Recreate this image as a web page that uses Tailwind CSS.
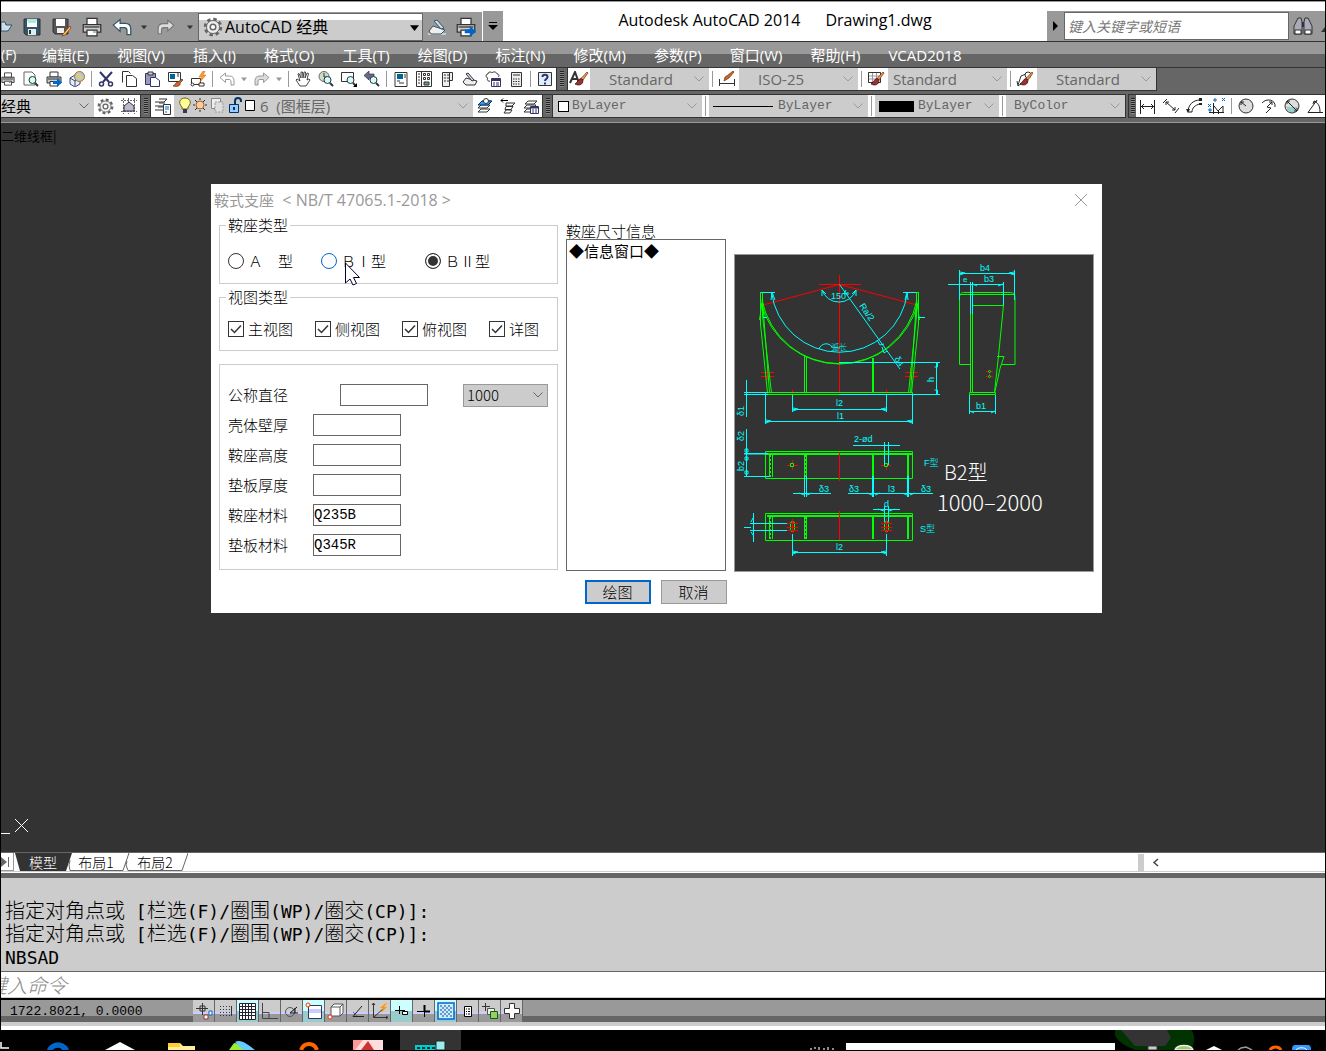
<!DOCTYPE html>
<html lang="zh-CN">
<head>
  <meta charset="UTF-8" />
  <meta name="viewport" content="width=device-width, initial-scale=1.0" />
  <title>Autodesk AutoCAD 2014 - Drawing1.dwg</title>
  <script src="https://cdn.jsdelivr.net/npm/@tailwindcss/browser@4"></script>
</head>
<body class="min-h-screen flex flex-col bg-black overflow-hidden font-['Open_Sans','Noto_Sans_CJK_SC',sans-serif] text-black">

  <!-- Shared icon shapes -->
  <svg class="hidden">
    <symbol id="chev" viewBox="0 0 12 12"><path d="M1.500 3.500l4.500 4.500 4.500-4.500" fill="none" stroke="currentColor"/></symbol>
    <symbol id="tri" viewBox="0 0 8 8"><path d="M0 2h8L4 7z" fill="currentColor"/></symbol>
    <symbol id="printer" viewBox="0 0 16 16">
      <path d="M4 1h8v5H4z" fill="#fff" stroke="#333"/><path d="M1 6h14v6H1z" fill="#ccc" stroke="#333"/>
      <path d="M2 8h12" stroke="#333"/><path d="M4 10.500h8V15H4z" fill="#fff" stroke="#333"/><path d="M9 12h2" stroke="#39c"/>
    </symbol>
    <symbol id="undo" viewBox="0 0 16 16"><path d="M1 6.500L6.500 2v3h4c3 0 4.500 2 4.500 4.500V14h-3v-3c0-1.500-.5-2.500-2-2.500H6.500v3z" fill="#fff" stroke="currentColor"/></symbol>
    <symbol id="redo" viewBox="0 0 16 16"><path d="M15 6.500L9.500 2v3h-4C2.500 5 1 7 1 9.500V14h3v-3c0-1.500.5-2.500 2-2.500h3.500v3z" fill="#ddd" stroke="currentColor"/></symbol>
    <symbol id="brush" viewBox="0 0 16 16"><path d="M15 2l-5 7-2-1.500L14 1z" fill="#f93" stroke="#633" stroke-width=".7"/><path d="M10 9L8 7.500C5 8 5.500 11 2 13c4 2 8 1 8-4z" fill="#933" stroke="#300" stroke-width=".7"/></symbol>
    <symbol id="lens" viewBox="0 0 16 16"><circle cx="9.500" cy="9" r="3.500" fill="#cff" stroke="#333"/><path d="M12 12l3 3" stroke="#333" stroke-width="2"/></symbol>
    <symbol id="gear" viewBox="0 0 20 20">
      <circle cx="10" cy="10" r="7.800" fill="none" stroke="#666" stroke-width="3" stroke-dasharray="3.400 2.730"/>
      <circle cx="10" cy="10" r="6.500" fill="#eee" stroke="#666"/><circle cx="10" cy="10" r="2.800" fill="#fff" stroke="#666" stroke-width="1.500"/>
    </symbol>
    <symbol id="layers" viewBox="0 0 16 16"><path d="M5 3h9l-3 3H2zM4 7h9l-3 3H1zM4 11h9l-3 3H1z" fill="#fff" stroke="#333"/></symbol>
    <symbol id="blueArrow" viewBox="0 0 16 16"><path d="M7 10h4V7l5 4.500-5 4.500v-3H7z" fill="#06c"/></symbol>
    <symbol id="tick" viewBox="0 0 16 16"><path d="M3 8l3.500 3.500L13 4.500" fill="none" stroke="#333" stroke-width="1.500"/></symbol>
    <symbol id="palette" viewBox="0 0 16 16">
      <path d="M2 1.500h12v14H2z" fill="#fff" stroke="#333"/><path d="M4 3h6v5H4z" fill="#069"/><path d="M11 4h2M11 6h2M4 10h3M6 12h5" stroke="#333"/>
    </symbol>
  </svg>

  <div class="flex-1 flex flex-col border-t border-x border-black bg-white">

    <!-- Title bar -->
    <header class="h-[41px] shrink-0 flex items-end border-t border-b border-t-[#999] border-b-[#333]">
      <div class="h-[29px] w-[482px] flex items-center bg-[#999] border-r border-white">
        <button class="w-4 h-6 text-[#333]" aria-label="打开"><svg class="w-3 h-4" viewBox="0 0 12 16"><path d="M0 3h4l1 3h6l-4 6H0z" fill="#cde" stroke="#356"/></svg></button>
        <button class="w-[30px] grid place-items-center" aria-label="保存"><svg class="size-[18px]" viewBox="0 0 18 18"><path d="M1 1h16v16H3l-2-2z" fill="#356" stroke="#333"/><path d="M4 1h10v8H4z" fill="#fff"/><path d="M4 2h10M5 4h8" stroke="#6cc"/><path d="M5 11h8v6H5z" fill="#dee"/><path d="M6 12h2v4H6z" fill="#333"/></svg></button>
        <button class="w-[30px] grid place-items-center" aria-label="另存为"><svg class="size-5" viewBox="0 0 20 20"><path d="M1 2h15v15H3l-2-2z" fill="#555" stroke="#333"/><path d="M4 2h9v7H4z" fill="#fff"/><path d="M5 11h7v5H5z" fill="#eee"/><path d="M18 9l-7 8-1 2 3-1 6-7z" fill="#fc6" stroke="#930" stroke-width=".8"/></svg></button>
        <button class="w-[30px] grid place-items-center" aria-label="打印"><svg class="size-5"><use href="#printer"/></svg></button>
        <button class="w-[30px] grid place-items-center text-[#356]" aria-label="放弃"><svg class="size-5"><use href="#undo"/></svg></button>
        <button class="w-[14px] grid place-items-center text-[#333]" aria-label="放弃列表"><svg class="size-[6px]"><use href="#tri"/></svg></button>
        <button class="w-[30px] grid place-items-center text-[#777]" aria-label="重做"><svg class="size-[18px]"><use href="#redo"/></svg></button>
        <button class="w-[17px] grid place-items-center text-[#333]" aria-label="重做列表"><svg class="size-[6px]"><use href="#tri"/></svg></button>
        <div class="relative w-[225px] h-[28px] flex items-center border border-[#666] bg-linear-to-b from-white from-25% to-[#ccc] to-25% pl-1">
          <svg class="size-5 shrink-0"><use href="#gear"/></svg>
          <select aria-label="工作空间" class="flex-1 h-full appearance-none pl-[2px] text-base leading-6"><option>AutoCAD 经典</option></select>
          <svg class="absolute right-[3px] top-[9px] size-[9px] pointer-events-none"><use href="#tri"/></svg>
        </div>
        <button class="w-[28px] grid place-items-center" aria-label="图纸集"><svg class="size-5" viewBox="0 0 20 20"><path d="M1 16h18v2H1z" fill="#ccc"/><path d="M2 14l4-5 12 4-4 4H4z" fill="#eee" stroke="#356"/><path d="M7 4l3-1 7 8-3 1z" fill="#cde" stroke="#356"/></svg></button>
        <button class="w-[30px] grid place-items-center" aria-label="批处理打印"><svg class="size-5"><use href="#printer"/><use href="#blueArrow"/></svg></button>
      </div>
      <button class="h-[30px] w-[20px] grid place-items-center bg-[#999] mr-auto" aria-label="自定义快速访问工具栏"><svg class="size-[10px]" viewBox="0 0 10 10"><path d="M1 1.500h8" stroke="#000"/><path d="M0 4h10L5 9z"/></svg></button>
      <h1 class="h-[31px] whitespace-pre text-base leading-5 px-2">Autodesk AutoCAD 2014      Drawing1.dwg</h1>
      <div class="ml-auto h-[30px] w-[278px] flex items-center bg-[#999]">
        <svg class="w-[17px] h-3" viewBox="0 0 17 12"><path d="M6 1l5 5-5 5z"/></svg>
        <input type="text" aria-label="搜索" placeholder="键入关键字或短语" class="w-[225px] h-[28px] bg-white border border-[#666] px-[3px] text-sm italic placeholder:text-[#777]" />
        <svg class="ml-1 size-5" viewBox="0 0 20 20"><path d="M3 6l2-4h3l1 4v12H1V10zM17 6l-2-4h-3l-1 4v12h8V10z" fill="#aab" stroke="#333"/><path d="M2 14h6v4H2zM12 14h6v4h-6z" fill="#fff" stroke="#333"/><path d="M9 6h2v5H9z" fill="#333"/></svg>
        <svg class="ml-auto w-1 h-5" viewBox="0 0 4 20"><path d="M4 11l-4 5h4z" fill="#333"/></svg>
      </div>
    </header>

    <!-- Menu -->
    <nav class="h-[26px] shrink-0 flex items-center gap-7 whitespace-nowrap text-white text-[15px] leading-5 bg-linear-to-b from-[#999] from-50% to-[#666] to-50% border-b border-[#333]">
      <a href="#" class="w-[13px] text-sm leading-5">(F)</a>
      <a href="#">编辑(E)</a>
      <a href="#">视图(V)</a>
      <a href="#">插入(I)</a>
      <a href="#">格式(O)</a>
      <a href="#">工具(T)</a>
      <a href="#">绘图(D)</a>
      <a href="#">标注(N)</a>
      <a href="#">修改(M)</a>
      <a href="#">参数(P)</a>
      <a href="#">窗口(W)</a>
      <a href="#">帮助(H)</a>
      <a href="#">VCAD2018</a>
    </nav>

    <!-- Standard and styles toolbars -->
    <div class="h-[26px] shrink-0 flex items-start bg-[#666]">
      <div class="h-[23px] flex items-center bg-white border-b border-r border-[#333]">
        <button class="w-[18px] flex justify-end pr-1" aria-label="打印"><svg class="size-4"><use href="#printer"/></svg></button>
        <button class="w-[23px] grid place-items-center" aria-label="打印预览"><svg class="size-4" viewBox="0 0 16 16"><path d="M1 1h8l3 3v10H1z" fill="#fff" stroke="#666"/><use href="#lens"/></svg></button>
        <button class="w-[23px] grid place-items-center" aria-label="发布"><svg class="size-4"><use href="#printer"/><use href="#blueArrow"/></svg></button>
        <button class="w-[23px] grid place-items-center" aria-label="三维打印"><svg class="size-4" viewBox="0 0 16 16"><path d="M1 7l5-3 5 3v6l-5 3-5-3z" fill="#def" stroke="#446"/><path d="M6 10v5M1 7l5 3 5-3" stroke="#446" fill="none"/><circle cx="10.500" cy="5.500" r="5" fill="#9cf" stroke="#c60"/><path d="M8 3c3 0 4 2 3 6M7 7c3-2 6-1 7 0" stroke="#fc3" stroke-width="1.500" fill="none"/></svg></button>
        <div class="w-[6px] h-4 flex justify-center"><i class="w-px bg-[#999]"></i></div>
        <button class="w-[23px] grid place-items-center" aria-label="剪切"><svg class="size-4" viewBox="0 0 16 16"><path d="M2 1l9 10M14 1L5 11" stroke="#336" stroke-width="2"/><circle cx="3.500" cy="13" r="2" fill="none" stroke="#336" stroke-width="1.500"/><circle cx="12.500" cy="13" r="2" fill="none" stroke="#336" stroke-width="1.500"/></svg></button>
        <button class="w-[23px] grid place-items-center" aria-label="复制"><svg class="size-4" viewBox="0 0 16 16"><path d="M1.500 11.500V.5h6l2 2" fill="none" stroke="#333"/><path d="M5.500 4.500h6l4 3v8h-10z" fill="#fff" stroke="#333"/></svg></button>
        <button class="w-[23px] grid place-items-center" aria-label="粘贴"><svg class="size-4" viewBox="0 0 16 16"><path d="M1.500 2.500h10v11h-10z" fill="#99b" stroke="#336"/><path d="M4 1h5v3H4z" fill="#ccc" stroke="#333"/><path d="M6.500 6.500h5l4 3v6h-9z" fill="#fff" stroke="#336"/></svg></button>
        <button class="w-[23px] grid place-items-center" aria-label="特性匹配"><svg class="size-4" viewBox="0 0 16 16"><path d="M1.500 1.500h12v9h-12z" fill="#fff" stroke="#333"/><path d="M3 3h5v5H3z" fill="#069"/><path d="M10 3h2M10 5h2" stroke="#333"/><path d="M15 8l-4 3c-3 0-2 3-5 4 4 1 8 0 7-3l3-3z" fill="#c63" stroke="#630" stroke-width=".7"/></svg></button>
        <button class="w-[23px] grid place-items-center" aria-label="块编辑器"><svg class="size-4" viewBox="0 0 16 16"><path d="M1.500 7.500h9v6h-9z" fill="#fff" stroke="#333"/><circle cx="2.500" cy="13.500" r="1.500" fill="#fff" stroke="#333"/><path d="M9 12h5v3H9z" fill="#fff" stroke="#333"/><path d="M13 0L9 6h3l-2 5 6-7h-3l2-4z" fill="#f93" stroke="#c60" stroke-width=".5"/></svg></button>
        <div class="w-[6px] h-4 flex justify-center"><i class="w-px bg-[#999]"></i></div>
        <button class="w-[23px] grid place-items-center text-[#999]" aria-label="放弃"><svg class="size-4"><use href="#undo"/></svg></button>
        <button class="w-3 grid place-items-center text-[#999]" aria-label="放弃列表"><svg class="size-[6px]"><use href="#tri"/></svg></button>
        <button class="w-[23px] grid place-items-center text-[#999]" aria-label="重做"><svg class="size-4"><use href="#redo"/></svg></button>
        <button class="w-3 grid place-items-center text-[#999]" aria-label="重做列表"><svg class="size-[6px]"><use href="#tri"/></svg></button>
        <div class="w-[6px] h-4 flex justify-center"><i class="w-px bg-[#999]"></i></div>
        <button class="w-[23px] grid place-items-center" aria-label="平移"><svg class="size-4" viewBox="0 0 16 16"><path d="M5 15l-4-6 1-1 3 2-2-7 1-.5L6 7V1h1.500l.5 6 1-6h1.500L10 7l2-5 1.500.5L12 9l2-1 1 1-4 6z" fill="#fff" stroke="#333" stroke-width=".9"/></svg></button>
        <button class="w-[23px] grid place-items-center" aria-label="实时缩放"><svg class="size-4" viewBox="0 0 16 16"><circle cx="6" cy="5.500" r="5" fill="#cdc" stroke="#666"/><path d="M6 2v4h3" stroke="#333" fill="none"/><use href="#lens"/></svg></button>
        <button class="w-[23px] grid place-items-center" aria-label="窗口缩放"><svg class="size-4" viewBox="0 0 16 16"><path d="M.5 1.500h12v9H.5z" fill="#fff" stroke="#333"/><use href="#lens"/><path d="M16 12v4h-4z"/></svg></button>
        <button class="w-[23px] grid place-items-center" aria-label="缩放上一个"><svg class="size-4" viewBox="0 0 16 16"><path d="M0 4.500L5 0v3h5v4H5v2z" fill="#669" stroke="#333" stroke-width=".7"/><use href="#lens"/></svg></button>
        <div class="w-[6px] h-4 flex justify-center"><i class="w-px bg-[#999]"></i></div>
        <button class="w-[23px] grid place-items-center" aria-label="特性"><svg class="size-4"><use href="#palette"/></svg></button>
        <button class="w-[23px] grid place-items-center" aria-label="设计中心"><svg class="size-4" viewBox="0 0 16 16"><path d="M.5.5h15v15H.5z" fill="#fff" stroke="#333"/><path d="M5.500 1v14M2 3h2M2 6h2M2 9h2M2 12h2" stroke="#333"/><path d="M7.500 2.500h2v2h-2zM11.500 2.500h2v2h-2zM7.500 6.500h2v2h-2zM11.500 6.500h2v2h-2z" fill="none" stroke="#333"/><path d="M8 11h5v3H8z" fill="#699" stroke="#333"/></svg></button>
        <button class="w-[23px] grid place-items-center" aria-label="工具选项板"><svg class="size-4" viewBox="0 0 16 16"><path d="M3.500 1.500h7v14h-7zM10.500 1.500h3v8h-3z" fill="#eee" stroke="#333"/><path d="M5 4h2M8 4h2M5 7h2M8 7h2M5 10h2M8 10h2" stroke="#333"/></svg></button>
        <button class="w-[23px] grid place-items-center" aria-label="图纸集管理器"><svg class="size-4" viewBox="0 0 16 16"><path d="M1 11l3-4 11 3-2 4H4z" fill="#eee" stroke="#333"/><path d="M4 3l2-1 6 7-2 1z" fill="#cde" stroke="#333"/></svg></button>
        <button class="w-[23px] grid place-items-center" aria-label="标记集管理器"><svg class="size-4" viewBox="0 0 16 16"><path d="M3 3c0-3 4-2 4-1 1-2 5-1 5 1 3 0 2 3 1 3M3 3c-3 0-2 4 0 4-2 2 1 4 2 3" fill="none" stroke="#333"/><path d="M6.500 7.500h9v8h-9z" fill="#fff" stroke="#336"/><path d="M7 9h8" stroke="#336" stroke-width="2"/><path d="M8 12h2M11 12h3M8 14h2M11 14h3" stroke="#336"/></svg></button>
        <button class="w-[23px] grid place-items-center" aria-label="快速计算器"><svg class="size-4" viewBox="0 0 16 16"><path d="M3.500 1.500h10v14h-10z" fill="#eee" stroke="#333"/><path d="M5 4h7" stroke="#333"/><path d="M5 8h7M5 10.500h7M5 13h7" stroke="#333" stroke-dasharray="1.500 1"/></svg></button>
        <div class="w-[6px] h-4 flex justify-center"><i class="w-px bg-[#999]"></i></div>
        <button class="w-[23px] grid place-items-center" aria-label="帮助"><svg class="size-4" viewBox="0 0 16 16"><path d="M1.500 1.500h13v13h-13z" fill="#def" stroke="#333"/><path d="M5.500 6c0-3 5-3 5 0 0 2-2.500 2-2.500 4M8 11.500v2" stroke="#336" stroke-width="2" fill="none"/></svg></button>
      </div>
      <div class="h-[23px] w-[11px] grid place-items-center border-b border-r border-[#333]"><i class="w-1 h-4 bg-[repeating-linear-gradient(#222_0_1px,#888_1px_2px)]"></i></div>
      <div class="h-[23px] flex items-center bg-white border-b border-r border-[#333] text-[15px] text-[#666]">
        <svg class="w-[22px] h-4" viewBox="0 0 22 16"><path d="M2 12L7 1l4 11M4 8h6" stroke="#333" stroke-width="2" fill="none"/><use href="#brush" x="5" width="16" height="16"/></svg>
        <div class="relative w-[119px] h-[22px]">
          <select aria-label="文字样式" class="appearance-none w-full h-full bg-[#ccc] pl-[19px]"><option>Standard</option></select>
          <svg class="absolute right-1 top-[5px] size-3 text-[#999] pointer-events-none"><use href="#chev"/></svg>
        </div>
        <div class="w-[6px] h-4 flex justify-center"><i class="w-px bg-[#999]"></i></div>
        <svg class="w-6 h-4" viewBox="0 0 24 16"><path d="M4.500 8v7M19.500 8v7M5 12.500h14" stroke="#333"/><path d="M19 1l-5 6-5 3 1-4 3-2 5-4z" fill="#c63" stroke="#630" stroke-width=".7"/></svg>
        <div class="relative w-[119px] h-[22px]">
          <select aria-label="标注样式" class="appearance-none w-full h-full bg-[#ccc] pl-[19px]"><option>ISO-25</option></select>
          <svg class="absolute right-1 top-[5px] size-3 text-[#999] pointer-events-none"><use href="#chev"/></svg>
        </div>
        <div class="w-[6px] h-4 flex justify-center"><i class="w-px bg-[#999]"></i></div>
        <svg class="w-6 h-4" viewBox="0 0 24 16"><path d="M4.500 1.500h12v10h-12zM4.500 5h12M8.500 2v9M12.500 2v9M4.500 8h12" fill="#fff" stroke="#999"/><path d="M4.500 1.500h12v10h-12z" fill="none" stroke="#333"/><use href="#brush" x="5" width="16" height="16"/></svg>
        <div class="relative w-[119px] h-[22px]">
          <select aria-label="表格样式" class="appearance-none w-full h-full bg-[#ccc] pl-[5px]"><option>Standard</option></select>
          <svg class="absolute right-1 top-[5px] size-3 text-[#999] pointer-events-none"><use href="#chev"/></svg>
        </div>
        <div class="w-[6px] h-4 flex justify-center"><i class="w-px bg-[#999]"></i></div>
        <svg class="w-6 h-4" viewBox="0 0 24 16"><path d="M5 14l3-9 5-2M4 10l1 5 4-3" stroke="#333" fill="none"/><circle cx="15" cy="4" r="3" fill="#fff" stroke="#333"/><use href="#brush" x="5" width="16" height="16"/></svg>
        <div class="relative w-[119px] h-[22px]">
          <select aria-label="多重引线样式" class="appearance-none w-full h-full bg-[#ccc] pl-[19px]"><option>Standard</option></select>
          <svg class="absolute right-1 top-[5px] size-3 text-[#999] pointer-events-none"><use href="#chev"/></svg>
        </div>
      </div>
    </div>

    <!-- Workspace, layers, properties and dimension toolbars -->
    <div class="h-[29px] shrink-0 flex items-start bg-[#666] border-b border-[#999] font-['Liberation_Mono','Noto_Sans_CJK_SC',monospace] text-[13px] text-[#666]">
      <div class="h-6 flex items-center bg-white border-y border-r border-[#333]">
        <div class="relative w-[93px] h-[22px]">
          <select aria-label="工作空间工具栏" class="appearance-none w-full h-full bg-[#ccc] text-black text-[15px] font-['Open_Sans','Noto_Sans_CJK_SC',sans-serif]"><option>经典</option></select>
          <svg class="absolute right-1 top-[5px] size-3 text-[#666] pointer-events-none"><use href="#chev"/></svg>
        </div>
        <button class="w-[23px] grid place-items-center" aria-label="工作空间设置"><svg class="size-[17px]"><use href="#gear"/></svg></button>
        <button class="w-[23px] grid place-items-center" aria-label="我的工作空间"><svg class="size-4" viewBox="0 0 16 16"><path d="M2.500 0v16M7.500 0v16M13.500 0v16M0 2.500h16M0 13.500h16" stroke="#666" stroke-dasharray="2 1"/><path d="M3 8l5-4 5 4v5H3z" fill="#bbc" stroke="#334"/></svg></button>
      </div>
      <div class="h-6 w-[10px] grid place-items-center border-y border-r border-[#333]"><i class="w-1 h-4 bg-[repeating-linear-gradient(#222_0_1px,#888_1px_2px)]"></i></div>
      <div class="h-6 flex items-center bg-white border-y border-r border-[#333]">
        <button class="w-[23px] grid place-items-center" aria-label="图层特性管理器"><svg class="size-[17px]" viewBox="0 0 17 17"><path d="M5 1h8l-3 3H1M5 5h6M1 8h8M4 9h5M1 12h8" fill="none" stroke="#333"/><path d="M9.500 6.500h7v10h-7z" fill="#fff" stroke="#333"/><path d="M11 9h4M11 11h4M11 14h2" stroke="#06c"/></svg></button>
        <div class="relative w-[299px] h-[22px] flex items-center bg-[#ccc]">
          <svg class="w-[84px] h-5 shrink-0" viewBox="0 0 84 20">
            <path d="M8 11c-5-5-1-9 3-9s8 4 3 9v2H8z" fill="#ff9" stroke="#660"/><path d="M9 13h4v4H9z" fill="#336"/>
            <circle cx="26" cy="9" r="4" fill="#fc9" stroke="#963"/><path d="M26 2v2M26 14v2M19 9h2M31 9h2M21 4l2 2M31 4l-2 2M21 14l2-2M31 14l-2-2" stroke="#333"/>
            <path d="M37.500 2.500h9v10h-9z" fill="#eee" stroke="#888"/><path d="M41 6h8v10h-8z" fill="#ddd" stroke="#999" stroke-dasharray="2 1"/>
            <path d="M61 9V5c0-4 6-4 6 0v1" fill="none" stroke="#036" stroke-width="2"/><path d="M55.500 8.500h9v8h-9z" fill="#9cf" stroke="#036"/><path d="M60 11v3" stroke="#036" stroke-width="2"/>
            <path d="M71.500 4.500h9v10h-9z" fill="#fff" stroke="#000"/>
          </svg>
          <select aria-label="图层" class="appearance-none flex-1 h-full pl-[2px] whitespace-pre text-[15px] font-['Open_Sans','Noto_Sans_CJK_SC',sans-serif]"><option>6&nbsp; (图框层)</option></select>
          <svg class="absolute right-1 top-[5px] size-3 text-[#999] pointer-events-none"><use href="#chev"/></svg>
        </div>
        <button class="w-[23px] grid place-items-center" aria-label="将对象的图层置为当前"><svg class="size-4" viewBox="0 0 16 16"><use href="#layers"/><path d="M5 3h10l-4 4H1z" fill="#39f" stroke="#036"/><circle cx="9" cy="3" r="2.500" fill="#fff" stroke="#333"/></svg></button>
        <button class="w-[23px] grid place-items-center" aria-label="上一个图层"><svg class="size-4" viewBox="0 0 16 16"><path d="M6 5h9l-3 3H6zM6 8.500h7l-2 3H5zM6 12h6l-2 3H4z" fill="#fff" stroke="#333"/><path d="M1 2.500h7M3 .5l-2 2 2 2" stroke="#000" fill="none"/></svg></button>
        <button class="w-[23px] grid place-items-center" aria-label="图层状态管理器"><svg class="size-4" viewBox="0 0 16 16"><use href="#layers"/><path d="M7.500 8.500h8v7h-8z" fill="#fff" stroke="#336"/><path d="M8 9.500h7" stroke="#336" stroke-width="2"/><path d="M9 12h2M12 12h2M9 14h2M12 14h2" stroke="#336"/></svg></button>
      </div>
      <div class="h-6 w-[10px] grid place-items-center border-y border-r border-[#333]"><i class="w-1 h-4 bg-[repeating-linear-gradient(#222_0_1px,#888_1px_2px)]"></i></div>
      <div class="h-6 flex items-center bg-white border-y border-r border-[#333]">
        <div class="relative w-[149px] h-[22px] flex items-center bg-[#ccc] pl-[5px]">
          <i class="size-[11px] shrink-0 border border-black bg-white"></i>
          <select aria-label="颜色" class="appearance-none flex-1 h-full pl-[3px]"><option>ByLayer</option></select>
          <svg class="absolute right-1 top-[5px] size-3 text-[#999] pointer-events-none"><use href="#chev"/></svg>
        </div>
        <div class="w-[7px] h-5 flex justify-center"><i class="w-px bg-[#999]"></i></div>
        <div class="relative w-[159px] h-[22px] flex items-center bg-[#ccc] pl-1">
          <i class="w-[60px] h-px shrink-0 bg-black"></i>
          <select aria-label="线型" class="appearance-none flex-1 h-full pl-[5px]"><option>ByLayer</option></select>
          <svg class="absolute right-1 top-[5px] size-3 text-[#999] pointer-events-none"><use href="#chev"/></svg>
        </div>
        <div class="w-[7px] h-5 flex justify-center"><i class="w-px bg-[#999]"></i></div>
        <div class="relative w-[124px] h-[22px] flex items-center bg-[#ccc] pl-1">
          <i class="w-[35px] h-[11px] shrink-0 bg-black"></i>
          <select aria-label="线宽" class="appearance-none flex-1 h-full pl-1"><option>ByLayer</option></select>
          <svg class="absolute right-1 top-[5px] size-3 text-[#999] pointer-events-none"><use href="#chev"/></svg>
        </div>
        <div class="w-[7px] h-5 flex justify-center"><i class="w-px bg-[#999]"></i></div>
        <div class="relative w-[119px] h-[22px] bg-[#ccc]">
          <select aria-label="打印样式" class="appearance-none w-full h-full pl-2"><option>ByColor</option></select>
          <svg class="absolute right-1 top-[5px] size-3 text-[#999] pointer-events-none"><use href="#chev"/></svg>
        </div>
      </div>
      <div class="ml-[2px] h-6 w-2 grid place-items-center border-y border-l border-[#333]"><i class="w-1 h-4 bg-[repeating-linear-gradient(#222_0_1px,#888_1px_2px)]"></i></div>
      <div class="h-6 flex-1 flex items-center overflow-hidden bg-white border-y border-[#333]">
        <button class="w-[23px] shrink-0 grid place-items-center" aria-label="线性"><svg class="size-[17px]" viewBox="0 0 17 17"><path d="M1.500 2v14M15.500 2v14M2 8.500h13M5 6L2.500 8.500 5 11M12 6l2.500 2.500L12 11" stroke="#222" fill="none"/></svg></button>
        <button class="w-[23px] shrink-0 grid place-items-center" aria-label="对齐"><svg class="size-4" viewBox="0 0 16 16"><path d="M3 4l9 8M4 1L0 5M16 10l-4 5M3 7V4h3M12 9v3H9" stroke="#222" fill="none"/></svg></button>
        <button class="w-[23px] shrink-0 grid place-items-center" aria-label="弧长"><svg class="size-4" viewBox="0 0 16 16"><path d="M2 14C2 7 7 2 14 2M6 14c0-4 3-7 8-8M2 14h4" stroke="#222" fill="none"/><path d="M0 11l2 4 2-4zM13 0h3v3h-3zM13 5h3v2h-3z" fill="#222"/></svg></button>
        <button class="w-[23px] shrink-0 grid place-items-center" aria-label="坐标"><svg class="size-[17px]" viewBox="0 0 17 17"><path d="M5.500 5v11M1 14.500h15M6 8l4 5 5-5v6M10.500 13v3" stroke="#222" fill="none"/><path d="M6 1h2v2H6zM14 0l3 3M17 0l-3 3M0 6l3 3M3 6l-3 3M1 11h2v2H1z" stroke="#06c" fill="none"/></svg></button>
        <div class="w-[6px] h-4 flex justify-center shrink-0"><i class="w-px bg-[#999]"></i></div>
        <button class="w-[23px] shrink-0 grid place-items-center" aria-label="半径"><svg class="size-4" viewBox="0 0 16 16"><circle cx="8" cy="8" r="7" fill="#ddd" stroke="#333"/><path d="M8 8L3 4M3 7V4h3" stroke="#222" fill="none"/></svg></button>
        <button class="w-[23px] shrink-0 grid place-items-center" aria-label="折弯"><svg class="size-4" viewBox="0 0 16 16"><path d="M1 5c4-5 14-4 13 4M5 15l5-5-4-1 5-5M8 4h3v3" stroke="#222" fill="none"/></svg></button>
        <button class="w-[23px] shrink-0 grid place-items-center" aria-label="直径"><svg class="size-4" viewBox="0 0 16 16"><circle cx="8" cy="8" r="7" fill="#ddd" stroke="#333"/><path d="M2 9h12l-4 5H5z" fill="#9cc"/><path d="M3 3l10 10M3 6V3h3M13 10v3h-3" stroke="#222" fill="none"/></svg></button>
        <button class="w-[23px] shrink-0 grid place-items-center" aria-label="角度"><svg class="size-4" viewBox="0 0 16 16"><path d="M16 14.500H1L10 2M7 4c4 0 6 4 6 10M6 6l1-3 3 1" stroke="#222" fill="none"/></svg></button>
      </div>
    </div>

    <!-- Drawing area -->
    <main class="relative flex-1 min-h-[480px] bg-[#333]">
      <p class="pt-[3px] text-[13px] leading-5 font-['Noto_Sans_CJK_SC',sans-serif]">二维线框|</p>
      <svg class="absolute left-0 bottom-[18px] w-7 h-4" viewBox="0 0 28 16" stroke="#fff"><path d="M0 15.500h9M14 1l13 13M27 1L14 14"/></svg>

      <section class="absolute left-[210px] top-[61px] w-[891px] bg-white font-light font-['Noto_Sans_CJK_SC',sans-serif] text-[15px] leading-5" aria-labelledby="dlgTitle">
        <div class="h-[31px] flex items-center justify-between pl-[3px] pr-[14px] text-[#999]">
          <h2 id="dlgTitle" class="whitespace-pre font-normal font-['Open_Sans','Noto_Sans_CJK_SC',sans-serif]">鞍式支座<span class="text-base leading-5">  &lt; NB/T 47065.1-2018 &gt;</span></h2>
          <button aria-label="关闭"><svg class="size-[14px]" viewBox="0 0 14 14"><path d="M1 1l12 12M13 1L1 13" stroke="currentColor"/></svg></button>
        </div>

        <div class="flex gap-2 px-2">
          <form class="w-[339px]">
            <fieldset class="h-[69px] border border-[#ccc] pl-2">
              <legend class="px-[2px] -ml-[2px]">鞍座类型</legend>
              <div class="flex pt-4">
                <label class="w-[93px] flex items-center gap-1"><input type="radio" name="kind" class="appearance-none size-4 rounded-full border border-[#333]" />Ａ　型</label>
                <label class="w-[104px] flex items-center gap-1"><input type="radio" name="kind" class="appearance-none size-4 rounded-full border border-[#06c]" />ＢⅠ型</label>
                <label class="flex items-center gap-1"><input type="radio" name="kind" checked class="appearance-none size-4 rounded-full border border-[#333] checked:bg-[#333] checked:shadow-[inset_0_0_0_2px_white]" />ＢⅡ型</label>
              </div>
            </fieldset>
            <fieldset class="mt-[3px] h-[64px] border border-[#ccc] pl-2">
              <legend class="px-[2px] -ml-[2px]">视图类型</legend>
              <div class="flex pt-3">
                <label class="w-[87px] flex items-center gap-1"><span class="grid"><input type="checkbox" checked class="appearance-none size-4 border border-[#333] col-start-1 row-start-1" /><svg class="size-4 col-start-1 row-start-1 pointer-events-none"><use href="#tick"/></svg></span>主视图</label>
                <label class="w-[87px] flex items-center gap-1"><span class="grid"><input type="checkbox" checked class="appearance-none size-4 border border-[#333] col-start-1 row-start-1" /><svg class="size-4 col-start-1 row-start-1 pointer-events-none"><use href="#tick"/></svg></span>侧视图</label>
                <label class="w-[87px] flex items-center gap-1"><span class="grid"><input type="checkbox" checked class="appearance-none size-4 border border-[#333] col-start-1 row-start-1" /><svg class="size-4 col-start-1 row-start-1 pointer-events-none"><use href="#tick"/></svg></span>俯视图</label>
                <label class="flex items-center gap-1"><span class="grid"><input type="checkbox" checked class="appearance-none size-4 border border-[#333] col-start-1 row-start-1" /><svg class="size-4 col-start-1 row-start-1 pointer-events-none"><use href="#tick"/></svg></span>详图</label>
              </div>
            </fieldset>
            <div class="mt-[13px] h-[206px] border border-[#ccc] pl-2 pt-[19px] flex flex-col gap-2">
              <div class="flex items-center h-[22px]">
                <label for="dn" class="w-[85px]">公称直径</label>
                <input id="dn" type="text" class="ml-[27px] w-[88px] h-[22px] border border-[#666]" />
                <div class="relative ml-[35px] w-[85px] h-[23px]">
                  <select aria-label="公称直径列表" class="appearance-none w-full h-full border border-[#999] bg-[#ccc] pl-[3px]"><option>1000</option></select>
                  <svg class="absolute right-1 top-[5px] size-3 text-[#666] pointer-events-none"><use href="#chev"/></svg>
                </div>
              </div>
              <div class="flex items-center h-[22px]"><label for="thk" class="w-[85px]">壳体壁厚</label><input id="thk" type="text" class="w-[88px] h-[22px] border border-[#666]" /></div>
              <div class="flex items-center h-[22px]"><label for="hgt" class="w-[85px]">鞍座高度</label><input id="hgt" type="text" class="w-[88px] h-[22px] border border-[#666]" /></div>
              <div class="flex items-center h-[22px]"><label for="pad" class="w-[85px]">垫板厚度</label><input id="pad" type="text" class="w-[88px] h-[22px] border border-[#666]" /></div>
              <div class="flex items-center h-[22px]"><label for="mat1" class="w-[85px]">鞍座材料</label><input id="mat1" type="text" value="Q235B" class="w-[88px] h-[22px] border border-[#666] text-sm leading-4 font-['Liberation_Mono',monospace]" /></div>
              <div class="flex items-center h-[22px]"><label for="mat2" class="w-[85px]">垫板材料</label><input id="mat2" type="text" value="Q345R" class="w-[88px] h-[22px] border border-[#666] text-sm leading-4 font-['Liberation_Mono',monospace]" /></div>
            </div>
          </form>

          <div class="w-[160px] flex flex-col pt-[6px]">
            <label for="info" class="h-[18px]">鞍座尺寸信息</label>
            <select id="info" size="12" class="appearance-none h-[332px] border border-[#666] text-[15px] leading-4 overflow-hidden"><option class="block h-4 min-h-0 leading-4 p-0 pl-[2px]">◆信息窗口◆</option></select>
          </div>

          <svg class="mt-[39px] w-[360px] h-[318px] bg-[#333] border border-[#999]" viewBox="735 255 358 316" fill="none" stroke="#0ff" font-family="Liberation Sans, Noto Sans CJK SC, sans-serif" font-size="9" role="img" aria-label="鞍座示意图">
            <!-- front view -->
            <g stroke="#f00">
              <path d="M839.500 275v117M819 284.500h42M839.500 284.500L763 305M839.500 284.500L917 305"/>
              <path d="M761 372.500h13M761 376.500h13M905 372.500h13M905 376.500h13M767.500 368v12M910.500 368v12M792.500 390v5M886.500 390v5"/>
            </g>
            <g stroke="#0f0">
              <path d="M761 303a81 81 0 0 0 157 0M762 300a79 79 0 0 0 155 0" />
              <path d="M760.500 292v32l7 69M762.500 292v24l9 77M759.500 320l3-20 7 93M918.500 292v32l-7 69M916.500 292v24l-8 77M919.500 320l-3-20-6 93M760 292.500h4M914 292.500h4"/>
              <path d="M804.500 356v36M806.500 357v35M872.500 358v34M873.500 358v34M765.500 392.500h147v2h-147z"/>
            </g>
            <path d="M771.500 292A68.500 68.500 0 0 0 907.500 292M761 292.500h14M903 292.500h13M771 300l1-8 3 8M905 300l2-8 1 8M918 317.500h7M763 317.500h4"/>
            <path d="M822 290a18 18 0 0 0 34 0M822 296v-6l4 4M852 294l4-4v6M839.500 284.500L900 369M846 290l-2 4 4-1M877 340l3 5 4-1M882 347l2 6 3-2M819 349c2-6 10-7 13-2l8 1"/>
            <path d="M839 362.500h101M839 394.500h101M936.500 363v31M934.500 367h3v-4M934.500 390h3v4M744 392.500h24M744 394.500h24M746.500 380v37M765.500 395v29M912.500 395v29M766 421.500h146M792.500 395v17M886.500 395v17M793 409.500h93M766 420l5 1-5 2M912 420l-5 1 5 2M793 408l5 1-5 2M886 408l-5 1 5 2"/>
            <!-- side view -->
            <g stroke="#0f0">
              <path d="M970.500 364.500h-11V298c0-4 2-5.500 4-5.500h47c3 0 4.500 2 4.500 5v67h-13M960 294.500h54M973 305.500h30.500M970.500 305v87M972.500 305v87M1003.500 305l-5 51-4 36M997 356.500h7l-4 12-5 23M969.500 392.500h26v2h-26z"/>
              <circle cx="989.500" cy="371.500" r="1"/><circle cx="989.500" cy="376.500" r="1"/>
            </g>
            <path d="M986 371.500h2M991 371.500h2M986 376.500h2M991 376.500h2M989.500 373v2" stroke="#f00"/>
            <path d="M959.500 270v30M1014.500 270v30M960 273.500h54M948 284.500h55M970.500 282v32M972.500 282v32M1003.500 282v23M969.500 395v19M995.500 395v19M970 411.500h25M960 272l5 1-5 2M1014 272l-5 1 5 2M973 284l4 2M1003 284l-5 2M970 411l4 2M995 411l-4 2"/>
            <!-- plan, F type -->
            <g stroke="#0f0">
              <path d="M765.500 451.500h147v27h-147z"/><path d="M766 454h146" stroke-width="2"/>
              <path d="M769.500 455v22M772.500 455v22M804.500 455v22M806.500 455v22"/><path d="M770.500 455v22M805.500 455v22" stroke-dasharray="2 2"/>
              <path d="M873 455v22M908 455v22" stroke-width="2"/><path d="M790.500 463.500h3v3h-3zM884.500 463.500h3v3h-3z"/>
            </g>
            <path d="M839.500 452v29M787 465.500h3M794 465.500h4M792.500 460v3M792.500 467v3M881 465.500h3M888 465.500h3M886.500 467v3" stroke="#f00"/>
            <path d="M746.500 429v48M744 476.500h26M744 454h22M853 445.500h47M884.500 442v23M888.500 442v23M793 493.500h38M848 493.500h85M804.500 476v21M806.500 476v21M872.500 476v21M873.500 476v21M907.500 476v21M908.500 476v21M799 493l5 2M812 493l-5 2M867 493l5 2M880 493l-5 2M902 493l5 2M915 493l-5 2"/>
            <path d="M744 453.500h24M745 449h3v3h-3zM745 457h3v3h-3zM745 471h3v3h-3z"/>
            <!-- plan, S type -->
            <g stroke="#0f0">
              <path d="M765.500 513.500h147v27h-147z"/><path d="M767 516h145" stroke-width="2"/>
              <path d="M769.500 517v22M772.500 517v22M804.500 517v22M806.500 517v22"/><path d="M770.500 517v22M805.500 517v22" stroke-dasharray="2 2"/>
              <path d="M873 517v22M908 517v22" stroke-width="2"/>
              <rect x="790.500" y="521.500" width="4" height="10" rx="2"/><rect x="884.500" y="521.500" width="4" height="10" rx="2"/>
            </g>
            <path d="M839.500 511v29M787 523.500h11M787 527.500h11M787 530.500h11M792.500 519v14M881 523.500h11M881 527.500h11M881 530.500h11M886.500 519v14" stroke="#f00"/>
            <path d="M753.500 513v29M750 523.500h37M750 530.500h37M744 527.500h7M873 509.500h27M884.500 506v16M888.500 506v16M792.500 534v22M886.500 534v22M793 552.500h93M793 551l5 1-5 2M886 551l-5 1 5 2M753 518l-2 4M753 535l-2-3M878 509l6 2M895 509l-6 2"/>
            <!-- labels -->
            <g fill="#0ff" stroke="none">
              <text x="831" y="299">150°</text>
              <text x="831" y="350" font-size="8">弧长</text>
              <text transform="translate(859 306) rotate(55)" font-size="9">Ra/2</text>
              <text transform="translate(894 359) rotate(55)">δ4</text>
              <text transform="translate(934 382) rotate(-90)">h</text>
              <text x="836" y="406">l2</text>
              <text x="837" y="419">l1</text>
              <text transform="translate(744 416) rotate(-90)">δ1</text>
              <text transform="translate(744 441) rotate(-90)">δ2</text>
              <text transform="translate(744 471) rotate(-90)">b2</text>
              <text x="980" y="271">b4</text>
              <text x="963" y="282" font-size="8">e</text>
              <text x="984" y="282">b3</text>
              <text x="976" y="409">b1</text>
              <text x="854" y="442">2-ød</text>
              <text x="819" y="492">δ3</text>
              <text x="849" y="492">δ3</text>
              <text x="888" y="492">l3</text>
              <text x="921" y="492">δ3</text>
              <text x="884" y="507">d</text>
              <text x="836" y="550">l2</text>
              <text x="924" y="466" font-size="9">F型</text>
              <text x="920" y="532" font-size="9">S型</text>
            </g>
            <g fill="#fff" stroke="none" font-family="Noto Sans CJK SC, sans-serif" font-weight="300">
              <text x="944" y="480" font-size="20">B2型</text>
              <text x="937" y="511" font-size="22">1000–2000</text>
            </g>
          </svg>
        </div>

        <div class="flex justify-center gap-[10px] pr-[2px] pt-2 pb-[9px]">
          <button class="w-[66px] h-6 bg-[#ccc] border-2 border-[#06c]">绘图</button>
          <button class="w-[66px] h-6 bg-[#ccc] border border-[#999]">取消</button>
        </div>

        <!-- mouse pointer -->
        <svg class="absolute left-[134px] top-[78px] w-4 h-6" viewBox="0 0 16 24"><path d="M.5 1v20l4.500-4 3 6 3.500-1.500-3-6h6z" fill="#fff" stroke="#003"/></svg>
      </section>
    </main>

    <!-- Layout tabs -->
    <div class="h-[19px] shrink-0 flex items-stretch bg-white border-t border-[#666] font-light font-['Noto_Sans_CJK_SC',sans-serif] text-sm leading-[18px]">
      <button class="w-[13px] border-r border-b border-[#999]" aria-label="最后一个布局"><svg class="w-3 h-4" viewBox="0 0 12 16"><path d="M0 3l6 5-6 5z" fill="#666"/><path d="M7.500 3v10" stroke="#666"/></svg></button>
      <svg class="w-[6px] h-[18px]" viewBox="0 0 6 18"><path d="M1 0h5v18z" fill="#333"/></svg>
      <button class="w-[46px] h-[18px] bg-[#333] text-white">模型</button>
      <svg class="w-[10px] h-[18px]" viewBox="0 0 10 18"><path d="M0 0h6L0 18z" fill="#333"/><path d="M4 7l-1 5 1 5.500h6" fill="none" stroke="#666"/></svg>
      <button class="w-[40px] h-[18px] border-b border-[#666]">布局1</button>
      <svg class="w-[18px] h-[18px]" viewBox="0 0 18 18"><path d="M0 17.500h7L13 0M11 8l-1 4 2 5.500h6" fill="none" stroke="#666"/></svg>
      <button class="w-[42px] h-[18px] border-b border-[#666]">布局2</button>
      <svg class="w-[12px] h-[18px]" viewBox="0 0 12 18"><path d="M0 17.500h6L12 0" fill="none" stroke="#666"/></svg>
      <div class="ml-auto w-[187px] flex items-center gap-2">
        <i class="w-[6px] h-[17px] bg-[#ccc]"></i>
        <svg class="w-[7px] h-[9px]" viewBox="0 0 7 9"><path d="M6 1L2 4.500 6 8" fill="none" stroke="#444" stroke-width="1.500"/></svg>
      </div>
    </div>

    <!-- Command line -->
    <section class="shrink-0 border-t border-[#ccc] bg-[#ccc]">
      <div class="h-[3px] bg-white border-b-2 border-[#666]"></div>
      <div class="h-[97px] pt-[22px] pl-1 border-t-[3px] border-b border-[#666] font-['DejaVu_Sans_Mono','Noto_Sans_CJK_SC',monospace] text-lg leading-[23px]">
        <p class="h-[23px] whitespace-nowrap"><span class="text-xl leading-[23px] font-light">指定对角点或</span> [<span class="text-xl leading-[23px] font-light">栏选</span>(F)/<span class="text-xl leading-[23px] font-light">圈围</span>(WP)/<span class="text-xl leading-[23px] font-light">圈交</span>(CP)]:</p>
        <p class="h-[23px] whitespace-nowrap"><span class="text-xl leading-[23px] font-light">指定对角点或</span> [<span class="text-xl leading-[23px] font-light">栏选</span>(F)/<span class="text-xl leading-[23px] font-light">圈围</span>(WP)/<span class="text-xl leading-[23px] font-light">圈交</span>(CP)]:</p>
        <p class="h-[23px]">NBSAD</p>
      </div>
      <input type="text" aria-label="命令" placeholder="键入命令" class="block w-full h-[25px] -indent-[14px] bg-white text-xl leading-6 italic font-light placeholder:text-[#888] font-['Noto_Sans_CJK_SC',sans-serif]" />
    </section>

    <!-- Status bar -->
    <footer class="h-[29px] shrink-0 border-t border-[#ccc] bg-[#ccc]">
      <div class="h-6 flex border-t-2 border-black bg-linear-to-b from-[#999] from-75% to-[#666] to-75%">
        <output class="w-[192px] pl-[9px] text-[13px] leading-[23px] whitespace-pre font-['Liberation_Mono',monospace]">1722.8021, 0.0000</output>
        <div class="flex [&>button]:w-[22px] [&>button]:h-[22px] [&>button]:grid [&>button]:place-items-center [&>button]:border-r [&>button]:border-[#666]">
          <button class="bg-[linear-gradient(#ccc_0_55%,#ccf_55%_65%,#999_65%)]" aria-label="推断约束"><svg class="size-[18px]" viewBox="0 0 18 18"><path d="M1 6.500h12M7.500 1v12M5 4h5v5H5z" stroke="#333" fill="none"/><path d="M14 9h3v4h-3z" fill="#fff" stroke="#06c"/><path d="M9 13h4v4H9z" fill="#fff" stroke="#933"/></svg></button>
          <button class="bg-[linear-gradient(#ccc_0_55%,#ccf_55%_65%,#999_65%)]" aria-label="捕捉模式"><svg class="size-4" viewBox="0 0 16 16"><path d="M2 3.500h10M2 6.500h10M2 9.500h10M2 12.500h12" stroke="#333" stroke-dasharray="1 2"/><path d="M13.500 3v10" stroke="#333"/></svg></button>
          <button class="bg-[linear-gradient(#cff_0_50%,#9cc_50%)]" aria-label="栅格显示"><svg class="size-[17px]" viewBox="0 0 17 17"><path d="M.5.500h16v16H.5zM3.500 0v17M6.500 0v17M9.500 0v17M12.500 0v17M0 3.500h17M0 6.500h17M0 9.500h17M0 12.500h17" fill="#fff" stroke="#223"/></svg></button>
          <button class="bg-[linear-gradient(#ccc_0_55%,#ccf_55%_65%,#999_65%)]" aria-label="正交模式"><svg class="size-[18px]" viewBox="0 0 18 18"><path d="M1.500 1v15.500H17M2 10.500h6v6" stroke="#444" fill="none"/></svg></button>
          <button class="bg-[linear-gradient(#ccc_0_55%,#ccf_55%_65%,#999_65%)]" aria-label="极轴追踪"><svg class="size-4" viewBox="0 0 16 16"><circle cx="6" cy="9" r="4.500" fill="none" stroke="#555"/><path d="M13 4l-7 6h8M11 5v5" stroke="#111" fill="none"/></svg></button>
          <button class="bg-[linear-gradient(#cff_0_50%,#9cc_50%)]" aria-label="对象捕捉"><svg class="size-[18px]" viewBox="0 0 18 18"><path d="M3.500 3.500h13v13h-13z" fill="#fff" stroke="#336"/><path d="M4 7h12v4H4z" fill="#ccf"/><circle cx="3" cy="3" r="2" fill="#fff" stroke="#f30"/></svg></button>
          <button class="bg-[linear-gradient(#ccc_0_55%,#ccf_55%_65%,#999_65%)]" aria-label="三维对象捕捉"><svg class="size-[18px]" viewBox="0 0 18 18"><path d="M4 5l3-3h9v9l-3 3H4z" fill="#fff" stroke="#555"/><path d="M4 5h9v9M13 5l3-3" stroke="#555" fill="none"/><circle cx="3" cy="15" r="2" fill="#fff" stroke="#f30"/></svg></button>
          <button class="bg-[linear-gradient(#ccc_0_55%,#ccf_55%_65%,#999_65%)]" aria-label="对象捕捉追踪"><svg class="size-4" viewBox="0 0 16 16"><path d="M12 3L3 13.500h11" stroke="#222" fill="none"/><path d="M3 9l4 4" stroke="#666"/></svg></button>
          <button class="bg-[linear-gradient(#ccc_0_55%,#ccf_55%_65%,#999_65%)]" aria-label="动态UCS"><svg class="size-[18px]" viewBox="0 0 18 18"><path d="M2.500 1v14.500H17M3 15L13 6M1 3l1.500-2L4 3M15 14l2 1.500-2 1.500" stroke="#333" fill="none"/><path d="M15 1l-6 5h3l-2 5 6-6h-3l3-4z" fill="#f90"/></svg></button>
          <button class="bg-[linear-gradient(#cff_0_50%,#9cc_50%)]" aria-label="动态输入"><svg class="size-4" viewBox="0 0 16 16"><path d="M1 7.500h10M5.500 3v8" stroke="#000"/><path d="M8.500 8.500h5v3h-5z" fill="#fff" stroke="#000"/></svg></button>
          <button class="bg-[linear-gradient(#ccc_0_55%,#ccf_55%_65%,#999_65%)]" aria-label="线宽"><svg class="size-4" viewBox="0 0 16 16"><path d="M1 8.500h7M8.500 8v6" stroke="#000"/><path d="M8.500 2v7M8 8.500h6" stroke="#000" stroke-width="2"/></svg></button>
          <button class="bg-[linear-gradient(#cff_0_50%,#9cc_50%)]" aria-label="透明度"><svg class="size-[18px]" viewBox="0 0 18 18"><path d="M1 1h16v16H1z" fill="#cef" stroke="#06c" stroke-width="1.500"/><path d="M3 4h12M3 8h12M3 12h12" stroke="#69c" stroke-width="2" stroke-dasharray="2 2"/><path d="M5 6h10M5 10h10M5 14h10" stroke="#69c" stroke-width="2" stroke-dasharray="2 2"/></svg></button>
          <button class="bg-[linear-gradient(#ccc_0_55%,#ccf_55%_65%,#999_65%)]" aria-label="快捷特性"><svg class="size-4" viewBox="0 0 16 16"><path d="M4.500 3.500h7v10h-7z" fill="#fff" stroke="#000"/><path d="M6 6h1M8 6h2M6 8.500h1M8 8.500h2M6 11h1M8 11h2" stroke="#000"/></svg></button>
          <button class="bg-[linear-gradient(#ccc_0_55%,#ccf_55%_65%,#999_65%)]" aria-label="选择循环"><svg class="size-[18px]" viewBox="0 0 18 18"><path d="M1 4.500h8M4.500 1v8" stroke="#333"/><path d="M6.500 6.500h7v6h-7z" fill="#eee" stroke="#555"/><path d="M9.500 9.500h7v7h-7z" fill="#9c6" stroke="#060"/></svg></button>
          <button class="bg-[linear-gradient(#ccc_0_55%,#ccf_55%_65%,#999_65%)]" aria-label="注释监视器"><svg class="size-[18px]" viewBox="0 0 18 18"><path d="M6.500 1.500h5v5h5v5h-5v5h-5v-5h-5v-5h5z" fill="#fff" stroke="#333"/></svg></button>
        </div>
      </div>
    </footer>
    <div class="h-1 shrink-0 bg-white"></div>
  </div>

  <!-- Windows taskbar -->
  <div class="h-[21px] shrink-0 flex items-end bg-black overflow-hidden border-b border-black">
    <svg class="w-[400px] h-5 shrink-0" viewBox="0 0 400 20">
      <path d="M1 12v6h8" stroke="#fff" stroke-width="1.500" fill="none"/>
      <path d="M47 20c3-10 19-10 22 0h-7c-1-3-7-3-9 0z" fill="#06c"/>
      <path d="M105 20l15-8 15 8z" fill="#fff"/>
      <path d="M168 20v-7h12l3 3h12v4z" fill="#fe9"/><path d="M168 13h12v4h-12z" fill="#fc3"/>
      <path d="M229 20l5-7 6 1 10 6z" fill="#9e3"/><path d="M235 12c6-3 12 2 20 8h-12z" fill="#6cf"/>
      <path d="M301 20c3-8 13-8 16 0" stroke="#f60" stroke-width="4" fill="none"/>
      <path d="M353 10h30v10h-30z" fill="#fdd"/><path d="M353 10h10l-8 10h-2z" fill="#f99"/><path d="M361 20l7-9 6 9z" fill="#c33"/>
    </svg>
    <svg class="w-[61px] h-5 bg-[#333] shrink-0" viewBox="0 0 61 20"><path d="M15 15h22v5H15z" fill="#0cc"/><path d="M17 18h18" stroke="#033" stroke-width="2" stroke-dasharray="3 2"/><path d="M36 11h9v9h-9z" fill="#9ee" stroke="#222"/></svg>
    <svg class="ml-auto mr-2 w-7 h-[3px] shrink-0" viewBox="0 0 28 3"><path d="M1 1v2M4 1h2M9 0v3M14 1v2M18 0v3M23 1v2" stroke="#bbb" stroke-width="1.500"/></svg>
    <input type="text" aria-label="任务栏搜索" class="w-[269px] h-[7px] bg-white shrink-0" />
    <svg class="w-[211px] h-5 shrink-0" viewBox="0 0 211 20">
      <path d="M0 0h76c6 6 2 16 0 20H20C6 14-2 8 0 0z" fill="#030"/><path d="M6 0h46l4 8-6 8H20z" fill="#333"/>
      <path d="M33 16h9v4h-9z" fill="#ccc" stroke="#333"/>
      <path d="M60 20c2-6 16-6 18 0z" fill="#9c6" stroke="#eee" stroke-width="1.500"/>
      <path d="M91 20l8-4 8 4z" fill="#fff"/><path d="M123 20l3-2 5-1 6 3" stroke="#999" fill="none" stroke-width="1.500"/>
      <path d="M155 20c2-4 9-4 11 0" stroke="#f60" stroke-width="3" fill="none"/>
      <path d="M177 20c0-4 1-5 4-5h11c3 0 4 1 4 5z" fill="#39f"/><path d="M181 20c2-3 9-3 11 0" stroke="#fff" fill="none"/>
    </svg>
  </div>

</body>
</html>
